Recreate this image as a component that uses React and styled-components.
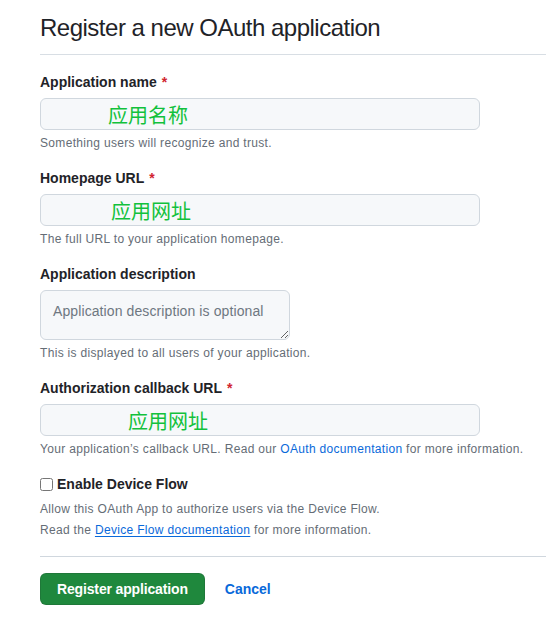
import React from 'react';
import styled, { createGlobalStyle } from 'styled-components';

const GlobalStyle = createGlobalStyle`
  body {
    margin: 0;
    background: #ffffff;
    font-family: 'Liberation Sans', Arial, 'Noto Sans CJK SC', sans-serif;
    color: #1f2328;
  }
`;

const Page = styled.div`
  padding: 10px 0 0 40px;
`;

const Subhead = styled.div`
  border-bottom: 1px solid #d8dee4;
  padding-bottom: 8px;
  margin-bottom: 17px;
`;

const Title = styled.h2`
  margin: 0;
  font-size: 24px;
  line-height: 36px;
  font-weight: 400;
  letter-spacing: -0.5px;
  color: #1f2328;
`;

const FormGroup = styled.div`
  margin-bottom: 16px;
  width: 440px;
`;

const Label = styled.label`
  display: block;
  font-size: 14px;
  line-height: 20px;
  font-weight: 700;
  color: #1f2328;
  margin-bottom: 6px;
`;

const Required = styled.span`
  color: #d1242f;
  margin-left: 5px;
`;

const TextInput = styled.input`
  display: block;
  box-sizing: border-box;
  width: 440px;
  height: 32px;
  padding: 0 12px 0 ${(p) => p.$indent}px;
  background: #f6f8fa;
  border: 1px solid #d0d7de;
  border-radius: 6px;
  font-family: 'Noto Sans CJK SC', sans-serif;
  font-size: 20px;
  color: #12c13c;
  outline: none;
`;

const TextArea = styled.textarea`
  display: block;
  box-sizing: border-box;
  width: 250px;
  height: 50px;
  padding: 10px 12px 6px;
  background: #f6f8fa;
  border: 1px solid #d0d7de;
  border-radius: 6px;
  font-family: 'Liberation Sans', Arial, sans-serif;
  font-size: 14px;
  line-height: 20px;
  letter-spacing: 0.1px;
  color: #1f2328;
  resize: both;
  outline: none;

  &::placeholder {
    color: #6e7781;
  }
`;

const Note = styled.p`
  margin: ${(p) => p.$top || 4}px 0 0;
  font-size: 12px;
  line-height: 18px;
  letter-spacing: 0.32px;
  color: #656d76;
  white-space: nowrap;
`;

const Link = styled.a`
  color: #0969da;
  text-decoration: ${(p) => (p.$underline ? 'underline' : 'none')};
  text-underline-offset: 2px;
`;

const CheckRow = styled.label`
  display: flex;
  align-items: center;
  font-size: 14px;
  line-height: 20px;
  font-weight: 700;
  color: #1f2328;
  margin-top: 2px;

  input {
    width: 13px;
    height: 13px;
    margin: 0 4px 0 0;
  }
`;

const Divider = styled.hr`
  border: 0;
  border-top: 1px solid #d0d7de;
  margin: 17px 0 16px;
`;

const Actions = styled.div`
  display: flex;
  align-items: center;
  gap: 20px;
`;

const PrimaryButton = styled.button`
  height: 32px;
  padding: 0 16px;
  background: #1f883d;
  color: #ffffff;
  border: 1px solid rgba(31, 35, 40, 0.15);
  border-radius: 6px;
  font-family: 'Liberation Sans', Arial, sans-serif;
  font-size: 14px;
  font-weight: 700;
  letter-spacing: -0.15px;
  cursor: pointer;
`;

const CancelLink = styled.a`
  color: #0969da;
  font-size: 14px;
  font-weight: 700;
  text-decoration: none;
`;

const App = () => {
  return (
    <Page>
      <GlobalStyle />
      <Subhead>
        <Title>Register a new OAuth application</Title>
      </Subhead>

      <FormGroup>
        <Label>
          Application name<Required>*</Required>
        </Label>
        <TextInput $indent={67} defaultValue="应用名称" />
        <Note>Something users will recognize and trust.</Note>
      </FormGroup>

      <FormGroup>
        <Label>
          Homepage URL<Required>*</Required>
        </Label>
        <TextInput $indent={70} defaultValue="应用网址" />
        <Note>The full URL to your application homepage.</Note>
      </FormGroup>

      <FormGroup>
        <Label>Application description</Label>
        <TextArea placeholder="Application description is optional" />
        <Note>This is displayed to all users of your application.</Note>
      </FormGroup>

      <FormGroup>
        <Label>
          Authorization callback URL<Required>*</Required>
        </Label>
        <TextInput $indent={87} defaultValue="应用网址" />
        <Note>
          Your application’s callback URL. Read our{' '}
          <Link href="#">OAuth documentation</Link> for more information.
        </Note>
      </FormGroup>

      <div>
        <CheckRow>
          <input type="checkbox" />
          Enable Device Flow
        </CheckRow>
        <Note $top={6}>Allow this OAuth App to authorize users via the Device Flow.</Note>
        <Note $top={3}>
          Read the <Link href="#" $underline>Device Flow documentation</Link> for more
          information.
        </Note>
      </div>

      <Divider />

      <Actions>
        <PrimaryButton>Register application</PrimaryButton>
        <CancelLink href="#">Cancel</CancelLink>
      </Actions>
    </Page>
  );
};

export default App;
